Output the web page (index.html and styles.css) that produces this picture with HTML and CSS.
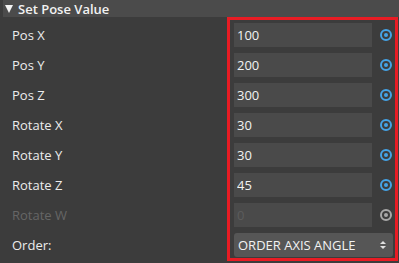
FILE: index.html
```html
<!DOCTYPE html>
<html lang="en">
<head>
  <meta charset="UTF-8" />
  <meta name="viewport" content="width=device-width, initial-scale=1.0" />
  <title>Set Pose Value</title>
  <link rel="stylesheet" href="styles.css">
</head>
<body>
  <div class="panel">
    <div class="header">
      <span class="caret"></span>
      <span class="title">Set Pose Value</span>
    </div>
    <div class="rows">
      <div class="row">
        <label>Pos X</label>
        <input type="text" value="100" />
        <span class="pin"></span>
      </div>
      <div class="row">
        <label>Pos Y</label>
        <input type="text" value="200" />
        <span class="pin"></span>
      </div>
      <div class="row">
        <label>Pos Z</label>
        <input type="text" value="300" />
        <span class="pin"></span>
      </div>
      <div class="row">
        <label>Rotate X</label>
        <input type="text" value="30" />
        <span class="pin"></span>
      </div>
      <div class="row">
        <label>Rotate Y</label>
        <input type="text" value="30" />
        <span class="pin"></span>
      </div>
      <div class="row">
        <label>Rotate Z</label>
        <input type="text" value="45" />
        <span class="pin"></span>
      </div>
      <div class="row disabled">
        <label>Rotate W</label>
        <input type="text" value="0" disabled />
        <span class="pin"></span>
      </div>
      <div class="row">
        <label>Order:</label>
        <div class="select">
          <span>ORDER AXIS ANGLE</span>
          <span class="arrows"></span>
        </div>
      </div>
    </div>
    <div class="highlight"></div>
  </div>
</body>
</html>
```

FILE: styles.css
```css
body {
  margin: 0;
  background: #3c3c3c;
  font-family: "Open Sans", "Noto Sans", sans-serif;
  font-size: 13px;
  color: #ececec;
}

.panel {
  position: relative;
  width: 399px;
  height: 263px;
}

.header {
  display: flex;
  align-items: center;
  height: 17px;
  margin-left: 3px;
  background: #4b4b4b;
}

.caret {
  width: 0;
  height: 0;
  margin: 0 5px 0 2px;
  border-left: 4.5px solid transparent;
  border-right: 4.5px solid transparent;
  border-top: 8px solid #f2f2f2;
}

.title {
  font-weight: 600;
  color: #f2f2f2;
}

.rows {
  display: flex;
  flex-direction: column;
  gap: 6px;
  padding-top: 6px;
}

.row {
  display: grid;
  grid-template-columns: 234px 138px 27px;
  align-items: center;
  height: 24px;
}

.row label {
  padding-left: 12px;
}

.row input {
  box-sizing: border-box;
  height: 24px;
  width: 138px;
  margin: 0;
  padding: 0 3px;
  border: none;
  outline: none;
  background: #4a4a4a;
  color: #f2f2f2;
  font-family: inherit;
  font-size: 13px;
}

.pin {
  justify-self: center;
  box-sizing: border-box;
  width: 12px;
  height: 12px;
  border: 2px solid #45a3e6;
  border-radius: 50%;
  position: relative;
}

.pin::after {
  content: "";
  position: absolute;
  left: 2px;
  top: 2px;
  width: 4px;
  height: 4px;
  border-radius: 50%;
  background: #45a3e6;
}

.disabled label {
  color: #666;
}

.disabled input {
  color: #5c5c5c;
}

.disabled .pin {
  border-color: #a8a8a8;
}

.disabled .pin::after {
  background: #a8a8a8;
}

.select {
  grid-column: 2 / 4;
  display: flex;
  align-items: center;
  justify-content: space-between;
  box-sizing: border-box;
  height: 24px;
  margin-right: 6px;
  padding: 0 7px 0 4px;
  border-radius: 3px;
  background: #565656;
  color: #f2f2f2;
}

.arrows {
  display: flex;
  flex-direction: column;
  gap: 2px;
}

.arrows::before,
.arrows::after {
  content: "";
  width: 0;
  height: 0;
  border-left: 3px solid transparent;
  border-right: 3px solid transparent;
}

.arrows::before {
  border-bottom: 3px solid #e0e0e0;
}

.arrows::after {
  border-top: 3px solid #e0e0e0;
}

.highlight {
  position: absolute;
  left: 227px;
  top: 17px;
  width: 165px;
  height: 238px;
  border: 3px solid #e81c24;
}
```
